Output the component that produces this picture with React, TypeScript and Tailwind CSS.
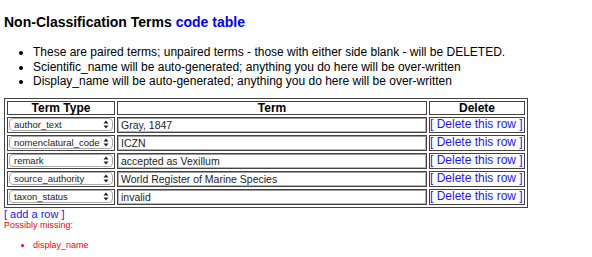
import React from 'react';

const rows = [
  { type: 'author_text', term: 'Gray, 1847' },
  { type: 'nomenclatural_code', term: 'ICZN' },
  { type: 'remark', term: 'accepted as Vexillum' },
  { type: 'source_authority', term: 'World Register of Marine Species' },
  { type: 'taxon_status', term: 'invalid' },
];

function Arrows() {
  return (
    <svg width="6" height="9" viewBox="0 0 6 9" className="absolute right-[3px] top-[1px]">
      <path d="M0.5 3.5 L3 0.5 L5.5 3.5 Z" fill="#222" />
      <path d="M0.5 5.5 L3 8.5 L5.5 5.5 Z" fill="#222" />
    </svg>
  );
}

export default function App() {
  return (
    <div className="px-[4px] text-black" style={{ fontFamily: '"Liberation Sans", Arial, sans-serif' }}>
      {/* Header */}
      <h3 className="pt-[14px] text-[14px] font-bold leading-[17px]">
        Non-Classification Terms <a className="text-[#0000ff]">code table</a>
      </h3>

      <ul className="mt-[14px] list-disc pl-[29px] text-[12px] leading-[14.5px]">
        <li>These are paired terms; unpaired terms - those with either side blank - will be DELETED.</li>
        <li>Scientific_name will be auto-generated; anything you do here will be over-written</li>
        <li>Display_name will be auto-generated; anything you do here will be over-written</li>
      </ul>

      {/* Terms table */}
      <table className="mt-[9px] border-separate border-spacing-[2px] border border-[#444] text-[12px]">
        <thead>
          <tr>
            <th className="h-[14px] w-[108px] border border-[#444] p-0 leading-[12px]">Term Type</th>
            <th className="w-[310px] border border-[#444] p-0 leading-[12px]">Term</th>
            <th className="w-[96px] border border-[#444] p-0 leading-[12px]">Delete</th>
          </tr>
        </thead>
        <tbody>
          {rows.map(r => (
            <tr key={r.type} className="h-[16px]">
              <td className="h-[16px] border border-[#444] px-px py-0 leading-[12px]">
                <div className="relative h-[13px] w-[104px] overflow-hidden whitespace-nowrap rounded-[4px] border border-[#a8a8a8] bg-white pl-[4px] text-[9.5px] leading-[11px] text-[#222]">
                  {r.type}
                  <Arrows />
                </div>
              </td>
              <td className="border border-[#444] p-0 leading-[12px]">
                <div className="h-[14px] w-full border border-[#b5b5b5] border-t-[#9a9a9a] pl-[2px] text-[10.5px] leading-[12px] text-[#222]">
                  {r.term}
                </div>
              </td>
              <td className="whitespace-nowrap border border-[#444] p-0 leading-[13px] text-[#1a1aee]">
                [ Delete this row ]
              </td>
            </tr>
          ))}
        </tbody>
      </table>

      <a className="block text-[11px] leading-[12px] text-[#1a1aee]">[ add a row ]</a>
      <div className="text-[9px] leading-[10px] text-[#ff0000]">Possibly missing:</div>
      <ul className="mt-[10px] list-disc pl-[29px] text-[9px] leading-[11px] text-[#ff0000]">
        <li>display_name</li>
      </ul>
    </div>
  );
}
